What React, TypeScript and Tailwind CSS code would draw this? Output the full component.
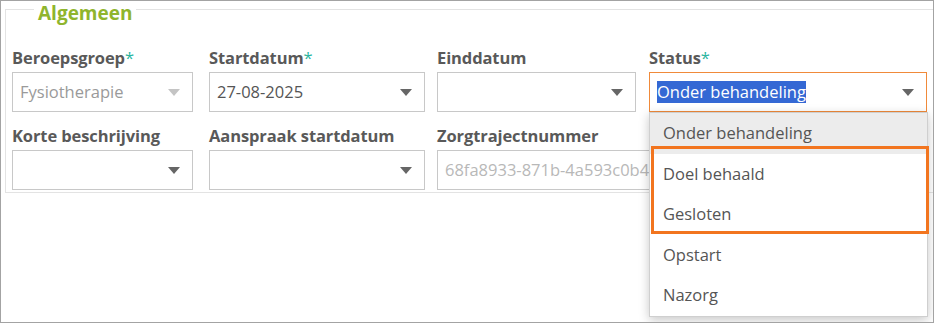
import React from 'react';

const font = { fontFamily: '"Open Sans", "Noto Sans", Arial, sans-serif' };

const Arrow = ({ muted }: { muted?: boolean }) => (
  <svg width="12" height="7" viewBox="0 0 12 7" className="shrink-0">
    <path d="M0 0 L12 0 L6 7 Z" fill={muted ? '#c4c4c4' : '#666666'} />
  </svg>
);

const Label = ({ text, required }: { text: string; required?: boolean }) => (
  <div className="h-[24px] text-[16.5px] font-bold leading-[24px] text-[#595959] tracking-[-0.1px]">
    {text}
    {required && <span className="text-[#2bb5a0] font-normal">*</span>}
  </div>
);

const Select = ({
  value,
  muted,
  width,
}: {
  value?: string;
  muted?: boolean;
  width: string;
}) => (
  <div className={`${width} mt-[2px] h-[40px] flex items-center justify-between border border-[#c8c8c8] bg-white pl-[7px] pr-[12px]`}>
    <span className={`text-[16.5px] ${muted ? 'text-[#9a9a9a]' : 'text-[#555555]'}`}>{value}</span>
    <Arrow muted={muted} />
  </div>
);

const options = ['Onder behandeling', 'Doel behaald', 'Gesloten', 'Opstart', 'Nazorg'];

export default function App() {
  return (
    <div style={font} className="relative w-[934px] h-[323px] overflow-hidden border border-[#a3a3a3] bg-white">
      <fieldset className="ml-[4px] mt-[3px] w-[921px] h-[189px] border border-[#e3e3e3] pl-[6px] pr-[6px]">
        <legend className="ml-[22px] px-[4px] h-[10px] text-[19px] font-bold leading-[10px] text-[#8fb52d]">
          <span className="relative top-[4px]">Algemeen</span>
        </legend>

        <div className="mt-[32px] flex">
          <div className="w-[181px]">
            <Label text="Beroepsgroep" required />
            <Select width="w-[181px]" value="Fysiotherapie" muted />
          </div>
          <div className="ml-[16px] w-[216px]">
            <Label text="Startdatum" required />
            <Select width="w-[216px]" value="27-08-2025" />
          </div>
          <div className="ml-[12px] w-[199px]">
            <Label text="Einddatum" />
            <Select width="w-[199px]" />
          </div>
          <div className="ml-[13px] w-[278px]">
            <Label text="Status" required />
            <div className="mt-[2px] h-[40px] flex items-center justify-between border border-[#f08a3a] bg-white pl-[7px] pr-[12px]">
              <span className="bg-[#3468d4] text-[16.5px] leading-[22px] text-white">Onder behandeling</span>
              <Arrow />
            </div>
          </div>
        </div>

        <div className="mt-[12px] flex">
          <div className="w-[181px]">
            <Label text="Korte beschrijving" />
            <Select width="w-[181px]" />
          </div>
          <div className="ml-[16px] w-[216px]">
            <Label text="Aanspraak startdatum" />
            <Select width="w-[216px]" />
          </div>
          <div className="ml-[12px] w-[230px]">
            <Label text="Zorgtrajectnummer" />
            <div className="mt-[2px] h-[40px] flex items-center border border-[#c8c8c8] bg-white pl-[7px] overflow-hidden whitespace-nowrap">
              <span className="text-[16.5px] text-[#b8b8b8]">68fa8933-871b-4a593c0b4</span>
            </div>
          </div>
        </div>
      </fieldset>

      {/* open status dropdown */}
      <div className="absolute left-[648px] top-[111px] w-[279px] border border-[#cfcfcf] bg-white shadow-[0_3px_10px_rgba(0,0,0,0.22)]">
        {options.map((o, i) => (
          <div
            key={o}
            className={`h-[40.6px] flex items-center pl-[13px] text-[16.5px] text-[#555555] ${i === 0 ? 'bg-[#ececec]' : 'bg-white'}`}
          >
            {o}
          </div>
        ))}
      </div>

      {/* annotation */}
      <div className="absolute left-[650px] top-[145px] w-[278px] h-[88px] border-[3px] border-[#f2751f]" />
    </div>
  );
}
